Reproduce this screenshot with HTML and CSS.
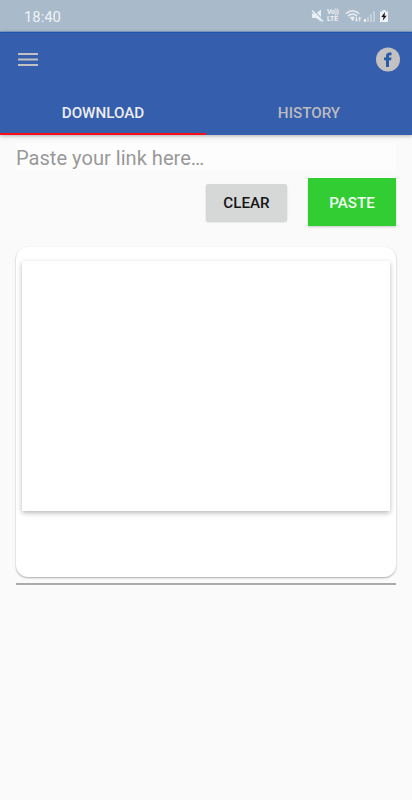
FILE: index.html
```html
<!DOCTYPE html>
<html lang="en">
<head>
<meta charset="utf-8">
<title>Downloader</title>
<link rel="stylesheet" href="styles.css">
</head>
<body>
<div class="status">
  <span class="clock">18:40</span>
  <div class="status-icons">
    <svg class="mute" width="13" height="14" viewBox="0 0 13 14"><path d="M1 4.500h4L10 .5v12L5 9H1z" fill="#e9eef3"/><path d="M2 .8 12.500 11.300" stroke="#a9bacb" stroke-width="1.200"/><path d="M1 1.500 12 12.500" stroke="#e9eef3" stroke-width="1.500"/></svg>
    <span class="volte"><span class="vo">Vo))</span><span>LTE</span></span>
    <svg class="wifi" width="17" height="14" viewBox="0 0 17 14"><g fill="none" stroke="#e9eef3" stroke-width="1.500"><path d="M.8 4.800Q7.500-1.400 14.200 4.800M3 7.100Q7.500 3 12 7.100M5.200 9.300Q7.500 7.200 9.500 9"/></g><path d="m5.700 9.800 2 2.200 1.800-2.200q-1.900-1.400-3.800 0z" fill="#e9eef3"/><path d="M11.500 8v4m-1.500-1.400 1.500 1.600 1.500-1.600M14.700 12.500v-4m-1.500 1.400 1.500-1.600 1.500 1.600" fill="none" stroke="#e9eef3"/></svg>
    <svg class="signal" width="12" height="12" viewBox="0 0 12 12"><path d="M0 9h2v3H0z" fill="#edf1f5"/><path d="M3 7h2v5H3zM6 4h2v8H6zM9 1h2v11H9z" fill="#c3cfda"/></svg>
    <svg class="battery" width="8" height="12" viewBox="0 0 8 12"><path d="M0 1.500h2.500V0h3v1.500H8V12H0z" fill="#edf1f5"/><path d="M5 2 1.300 7h2.200L2.800 10.600 6.700 5.700H4.500z" fill="#15191d"/></svg>
  </div>
</div>
<header class="header">
  <div class="toolbar">
    <svg width="20" height="14" viewBox="0 0 20 14"><path d="M0 0h20v2H0zM0 5.500h20v2H0zM0 11h20v2H0z" fill="#c2c0c0"/></svg>
    <svg width="24" height="24" viewBox="0 0 24 24"><circle cx="12" cy="11.500" r="12" fill="#c3c1c2"/><path d="M10 19v-6.700H8V9.500h2V8C10 5.700 11.300 4.500 13.500 4.500h2v2.700h-1.200c-1 0-1.300.4-1.300 1.200v1.100h2.500l-.4 2.800H13V19z" fill="#285aaa"/></svg>
  </div>
  <nav class="tabs"><a class="tab active">DOWNLOAD</a><a class="tab">HISTORY</a></nav>
</header>
<main class="main">
  <div class="field">Paste your link here…</div>
  <div class="actions"><button class="btn clear">CLEAR</button><button class="btn paste">PASTE</button></div>
  <section class="card"><div class="preview"></div></section>
  <div class="rule"></div>
</main>
</body>
</html>
```
FILE: styles.css
```css
* { box-sizing: border-box; }
body {
  margin: 0;
  height: 800px;
  overflow: hidden;
  background: #fafafa;
  font-family: Roboto, sans-serif;
}
.status {
  height: 32px;
  padding: 0 24px;
  display: flex;
  align-items: center;
  justify-content: space-between;
  background: #a9bacb;
  border-bottom: 1px solid #859fc8;
  color: #eef2f6;
}
.clock { font-size: 14.8px; line-height: 20px; padding-top: 2px; }
.status-icons { display: flex; align-items: center; }
.mute { margin-right: 3px; }
.volte {
  width: 13px;
  margin-right: 5px;
  padding-top: 1px;
  display: flex;
  flex-direction: column;
  font-size: 6.8px;
  line-height: 7px;
  font-weight: 700;
}
.vo { letter-spacing: -.3px; }
.wifi { margin-right: 2px; }
.signal { margin-right: 4px; }
.header {
  height: 103px;
  background: #355eac;
  border-top: 1px solid #2054ad;
  box-shadow: 0 1px 4px rgba(0, 0, 0, .3);
}
.toolbar {
  height: 54px;
  padding: 0 12px 0 18px;
  display: flex;
  align-items: center;
  justify-content: space-between;
}
.toolbar svg { overflow: visible; }
.tabs { display: flex; height: 48px; }
.tab {
  flex: 1;
  padding-top: 16px;
  text-align: center;
  font-size: 15.2px;
  line-height: 20px;
  font-weight: 500;
  color: #bcbbbe;
  border-bottom: 2px solid transparent;
}
.active { color: #ededf0; border-bottom-color: #fb0c1b; }
.main { padding: 8px 16px 0; }
.field {
  height: 27px;
  background: #fdfdfd;
  color: #999;
  font-size: 20.1px;
  line-height: 30px;
}
.actions {
  margin-top: 8px;
  height: 48px;
  display: flex;
  align-items: center;
  justify-content: flex-end;
  gap: 21px;
}
.btn {
  padding: 2px 0 0;
  border: 0;
  font: 500 15.2px/20px Roboto, sans-serif;
}
.clear {
  width: 81px;
  height: 37px;
  border-radius: 2px;
  background: #d6d7d7;
  color: #151515;
  box-shadow: 0 1px 2px rgba(0, 0, 0, .2);
}
.paste {
  width: 88px;
  height: 48px;
  background: #32cd32;
  color: #f2fff2;
  box-shadow: 0 1px 2px rgba(0, 0, 0, .2);
}
.card {
  height: 330px;
  margin-top: 21px;
  padding: 14px 6px 0;
  border-radius: 12px;
  background: #fff;
  box-shadow: 0 1px 2px rgba(0, 0, 0, .32);
}
.preview {
  height: 250px;
  background: #fff;
  box-shadow: 0 2px 5px rgba(0, 0, 0, .28);
}
.rule { height: 2px; margin-top: 6px; background: #a9aaad; }
```
